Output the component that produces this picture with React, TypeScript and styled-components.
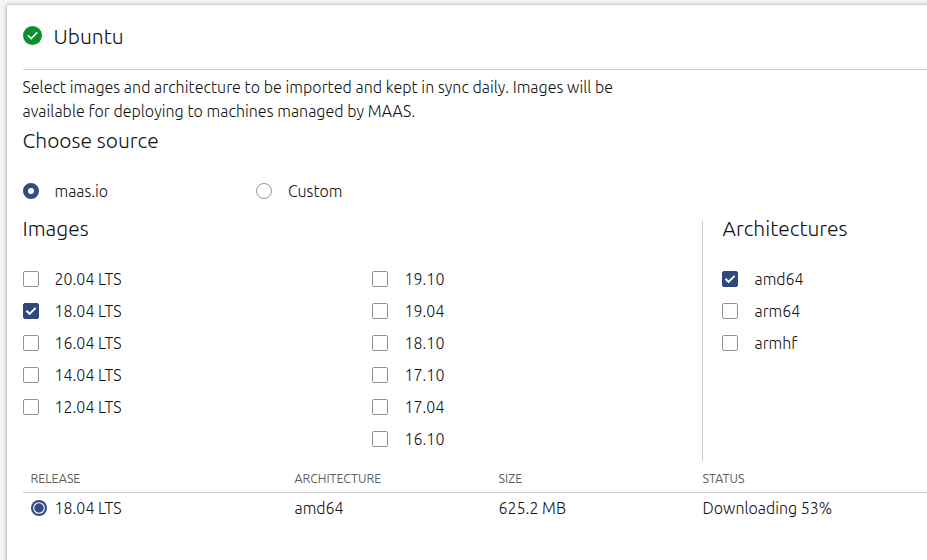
import React from 'react';
import styled, { createGlobalStyle } from 'styled-components';

const GlobalStyle = createGlobalStyle`
  * { box-sizing: border-box; }
  html, body { margin: 0; height: 100%; overflow: hidden; background: #f5f5f5; }
  body {
    color: #111;
    font-family: "Ubuntu", "Noto Sans", sans-serif;
    font-size: 16px;
    font-weight: 300;
    line-height: 24px;
  }
`;

const Page = styled.main`
  height: 560px;
  padding: 5px 0 0 7px;
  overflow: hidden;
`;

const Card = styled.section`
  height: 570px;
  padding-left: 16px;
  margin-right: -10px;
  background: #fff;
  border-radius: 2px;
  box-shadow: 0 0 2px 1px rgba(0, 0, 0, 0.1), 0 1px 5px 1px rgba(0, 0, 0, 0.18);
`;

const CardHeader = styled.header`
  display: flex;
  align-items: center;
  gap: 12px;
  height: 65px;
  padding-bottom: 3px;
  border-bottom: 1px solid #cdcdcd;
`;

const Heading = styled.h2`
  margin: 0 0 0 -0.5px;
  height: 32px;
  font-size: 21px;
  font-weight: 300;
  line-height: 32px;
  white-space: nowrap;
`;

const Intro = styled.p`
  width: 620px;
  margin: 5px 0 1px -0.5px;
  letter-spacing: 0.035px;
`;

const Sources = styled.div`
  display: grid;
  grid-template-columns: 233px 233px;
  margin: 19px 0 5px;
`;

const Panels = styled.div`
  display: grid;
  grid-template-columns: 679px 1fr;
  height: 249px;
`;

const Images = styled.div``;

const ImageColumns = styled.div`
  display: grid;
  grid-template-columns: 349px 1fr;
  margin-top: 19px;
`;

const Architectures = styled.div`
  height: 240px;
  margin-top: 9px;
  padding-left: 19px;
  border-left: 1px solid #cdcdcd;
`;

const ArchitectureBody = styled.div`
  margin-top: -9px;

  ${Heading} {
    margin-left: 0.5px;
  }
`;

const ArchitectureList = styled.div`
  margin-top: 19px;
`;

const Option = styled.label<{ $gap?: number }>`
  display: flex;
  align-items: center;
  gap: ${(p) => p.$gap ?? 15.5}px;
  height: 32px;
  white-space: nowrap;
`;

const Box = styled.span<{ $on?: boolean }>`
  display: flex;
  flex: none;
  width: 16px;
  height: 16px;
  border: 1px solid ${(p) => (p.$on ? '#31487e' : '#939393')};
  border-radius: 2px;
  background: ${(p) => (p.$on ? '#31487e' : '#fff')};
`;

const Radio = styled.span<{ $on?: boolean }>`
  flex: none;
  width: 16px;
  height: 16px;
  border: ${(p) => (p.$on ? '5px solid #344b83' : '1px solid #939393')};
  border-radius: 50%;
  background: #fff;
`;

const Table = styled.div`
  display: grid;
  grid-template-columns: 264px 204px 204px 1fr;
`;

const TableHead = styled(Table)`
  height: 32px;
  padding: 8px 0 0 7.5px;
  border-bottom: 1px solid #cdcdcd;
  color: #5e5e5e;
  font-size: 12.4px;
  font-weight: 400;
  line-height: 18px;
`;

const TableRow = styled(Table)`
  padding: 3px 0 0 7.5px;
`;

const ReleaseCell = styled.span`
  display: flex;
  align-items: center;
  gap: 8px;
`;

const SuccessIcon = () => (
  <svg width="19" height="19" viewBox="0 0 19 19">
    <circle cx="9.5" cy="9.5" r="9.5" fill="#0c8f2c" />
    <path d="M4.8 9.3l3.4 3.3 6-6.2" fill="none" stroke="#fff" strokeWidth="1.6" />
  </svg>
);

const Tick = () => (
  <svg width="14" height="14" viewBox="0 0 14 14">
    <path d="M2.4 6.7l3.2 3.2 6-6" fill="none" stroke="#fff" strokeWidth="2" />
  </svg>
);

const ProgressIcon = () => (
  <svg width="16" height="16" viewBox="0 0 16 16">
    <circle cx="8" cy="8" r="8" fill="#344b83" />
    <circle cx="8" cy="8" r="5.3" fill="none" stroke="#fff" strokeWidth="1.1" />
  </svg>
);

const Check = ({ label, on, gap }: { label: string; on?: boolean; gap?: number }) => (
  <Option $gap={gap}>
    <Box $on={on}>{on && <Tick />}</Box>
    {label}
  </Option>
);

const lts = ['20.04 LTS', '18.04 LTS', '16.04 LTS', '14.04 LTS', '12.04 LTS'];
const interim = ['19.10', '19.04', '18.10', '17.10', '17.04', '16.10'];
const architectures = ['amd64', 'arm64', 'armhf'];

export default function App() {
  return (
    <Page>
      <GlobalStyle />
      <Card>
        <CardHeader>
          <SuccessIcon />
          <Heading>Ubuntu</Heading>
        </CardHeader>
        <Intro>
          Select images and architecture to be imported and kept in sync daily. Images will be
          <br />
          available for deploying to machines managed by MAAS.
        </Intro>
        <Heading>Choose source</Heading>
        <Sources>
          <Option><Radio $on />maas.io</Option>
          <Option $gap={16}><Radio />Custom</Option>
        </Sources>
        <Panels>
          <Images>
            <Heading>Images</Heading>
            <ImageColumns>
              <div>{lts.map((l) => <Check key={l} label={l} on={l === '18.04 LTS'} />)}</div>
              <div>{interim.map((l) => <Check key={l} label={l} gap={16.5} />)}</div>
            </ImageColumns>
          </Images>
          <Architectures>
            <ArchitectureBody>
              <Heading>Architectures</Heading>
              <ArchitectureList>
                {architectures.map((l) => <Check key={l} label={l} on={l === 'amd64'} gap={16.5} />)}
              </ArchitectureList>
            </ArchitectureBody>
          </Architectures>
        </Panels>
        <TableHead>
          <span>RELEASE</span>
          <span>ARCHITECTURE</span>
          <span>SIZE</span>
          <span>STATUS</span>
        </TableHead>
        <TableRow>
          <ReleaseCell><ProgressIcon />18.04 LTS</ReleaseCell>
          <span>amd64</span>
          <span>625.2 MB</span>
          <span>Downloading 53%</span>
        </TableRow>
      </Card>
    </Page>
  );
}
